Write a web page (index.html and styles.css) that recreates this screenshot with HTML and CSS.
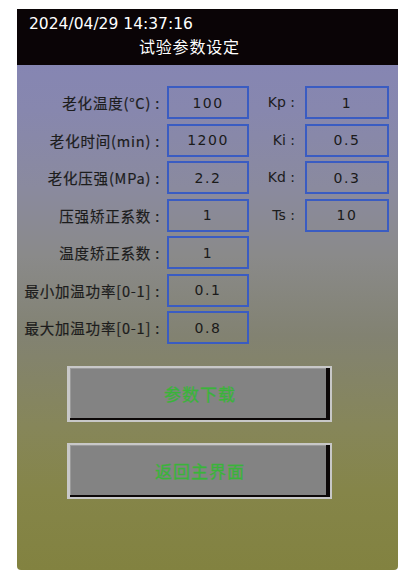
FILE: index.html
```html
<!DOCTYPE html>
<html lang="zh">
<head>
<meta charset="utf-8">
<link rel="stylesheet" href="styles.css">
</head>
<body>
<div class="screen">
  <header class="header">
    <div class="clock">2024/04/29 14:37:16</div>
    <div class="title">试验参数设定</div>
  </header>
  <main class="content">
    <div class="grid">
      <div class="label">老化温度(°C) :</div>
      <div class="box">100</div>
      <div class="label2">Kp :</div>
      <div class="box box-r">1</div>

      <div class="label">老化时间(min) :</div>
      <div class="box">1200</div>
      <div class="label2">Ki :</div>
      <div class="box box-r">0.5</div>

      <div class="label">老化压强(MPa) :</div>
      <div class="box">2.2</div>
      <div class="label2">Kd :</div>
      <div class="box box-r">0.3</div>

      <div class="label">压强矫正系数 :</div>
      <div class="box">1</div>
      <div class="label2">Ts :</div>
      <div class="box box-r">10</div>

      <div class="label">温度矫正系数 :</div>
      <div class="box">1</div>
      <div class="empty"></div>
      <div class="empty"></div>

      <div class="label">最小加温功率[0-1] :</div>
      <div class="box">0.1</div>
      <div class="empty"></div>
      <div class="empty"></div>

      <div class="label">最大加温功率[0-1] :</div>
      <div class="box">0.8</div>
      <div class="empty"></div>
      <div class="empty"></div>
    </div>
    <div class="buttons">
      <div class="btn">参数下载</div>
      <div class="btn">返回主界面</div>
    </div>
  </main>
</div>
</body>
</html>
```

FILE: styles.css
```css
html, body {
  margin: 0;
  padding: 0;
  background: #ffffff;
}

body {
  font-family: "DejaVu Sans", "Noto Sans CJK SC", sans-serif;
}

.screen {
  margin: 9px 0 0 17px;
  width: 381px;
  height: 561px;
  display: flex;
  flex-direction: column;
  border-radius: 0 0 4px 4px;
  overflow: hidden;
  background: linear-gradient(to bottom,
    #8484b8 0%,
    #8787ae 18%,
    #8a8a9e 32%,
    #8a8a8a 44%,
    #828272 58%,
    #86865a 74%,
    #858549 86%,
    #828240 100%);
}

.header {
  height: 56px;
  background: #0a0406;
  color: #ffffff;
  display: flex;
  flex-direction: column;
  box-sizing: border-box;
  padding-top: 5px;
}

.clock {
  font-family: "DejaVu Sans", sans-serif;
  font-size: 15.5px;
  line-height: 20px;
  padding-left: 12px;
}

.title {
  font-family: "Noto Sans CJK SC", sans-serif;
  font-size: 16px;
  line-height: 22px;
  letter-spacing: 0.8px;
  padding-left: 122px;
  margin-top: 1px;
}

.content {
  flex: 1;
  display: flex;
  flex-direction: column;
  padding-top: 21px;
}

.grid {
  display: grid;
  grid-template-columns: 150px 82px 56px 84px;
  grid-auto-rows: 33px;
  row-gap: 4.5px;
}

.label {
  font-family: "Noto Sans CJK SC", sans-serif;
  font-size: 14.5px;
  color: #1c1c1c;
  text-align: right;
  padding-right: 7px;
  line-height: 33px;
  white-space: nowrap;
  letter-spacing: 0.8px;
  -webkit-text-stroke: 0.2px #1c1c1c;
}

.label2 {
  font-family: "DejaVu Sans", sans-serif;
  font-size: 14px;
  color: #1c1c1c;
  text-align: right;
  padding-right: 10px;
  line-height: 33px;
  white-space: nowrap;
}

.box {
  box-sizing: border-box;
  border: 2px solid #3a5cc2;
  display: flex;
  align-items: center;
  justify-content: center;
  font-family: "DejaVu Sans", sans-serif;
  font-size: 14px;
  letter-spacing: 1.5px;
  color: #1a1a1a;
}

.buttons {
  display: flex;
  flex-direction: column;
  gap: 21px;
  margin-top: 22px;
  padding-left: 50px;
}

.btn {
  box-sizing: border-box;
  width: 265px;
  height: 56px;
  border: 2px solid #c8c8c8;
  border-left-width: 3px;
  background: #838383;
  box-shadow: inset -4px -2px 0 #0c0808, inset 1px 1px 0 #9a9a9a;
  display: flex;
  align-items: center;
  justify-content: center;
  font-family: "Noto Sans CJK SC", sans-serif;
  font-size: 17px;
  letter-spacing: 1px;
  color: #3ab43a;
  -webkit-text-stroke: 0.3px #3ab43a;
  padding-bottom: 2px;
}
```
